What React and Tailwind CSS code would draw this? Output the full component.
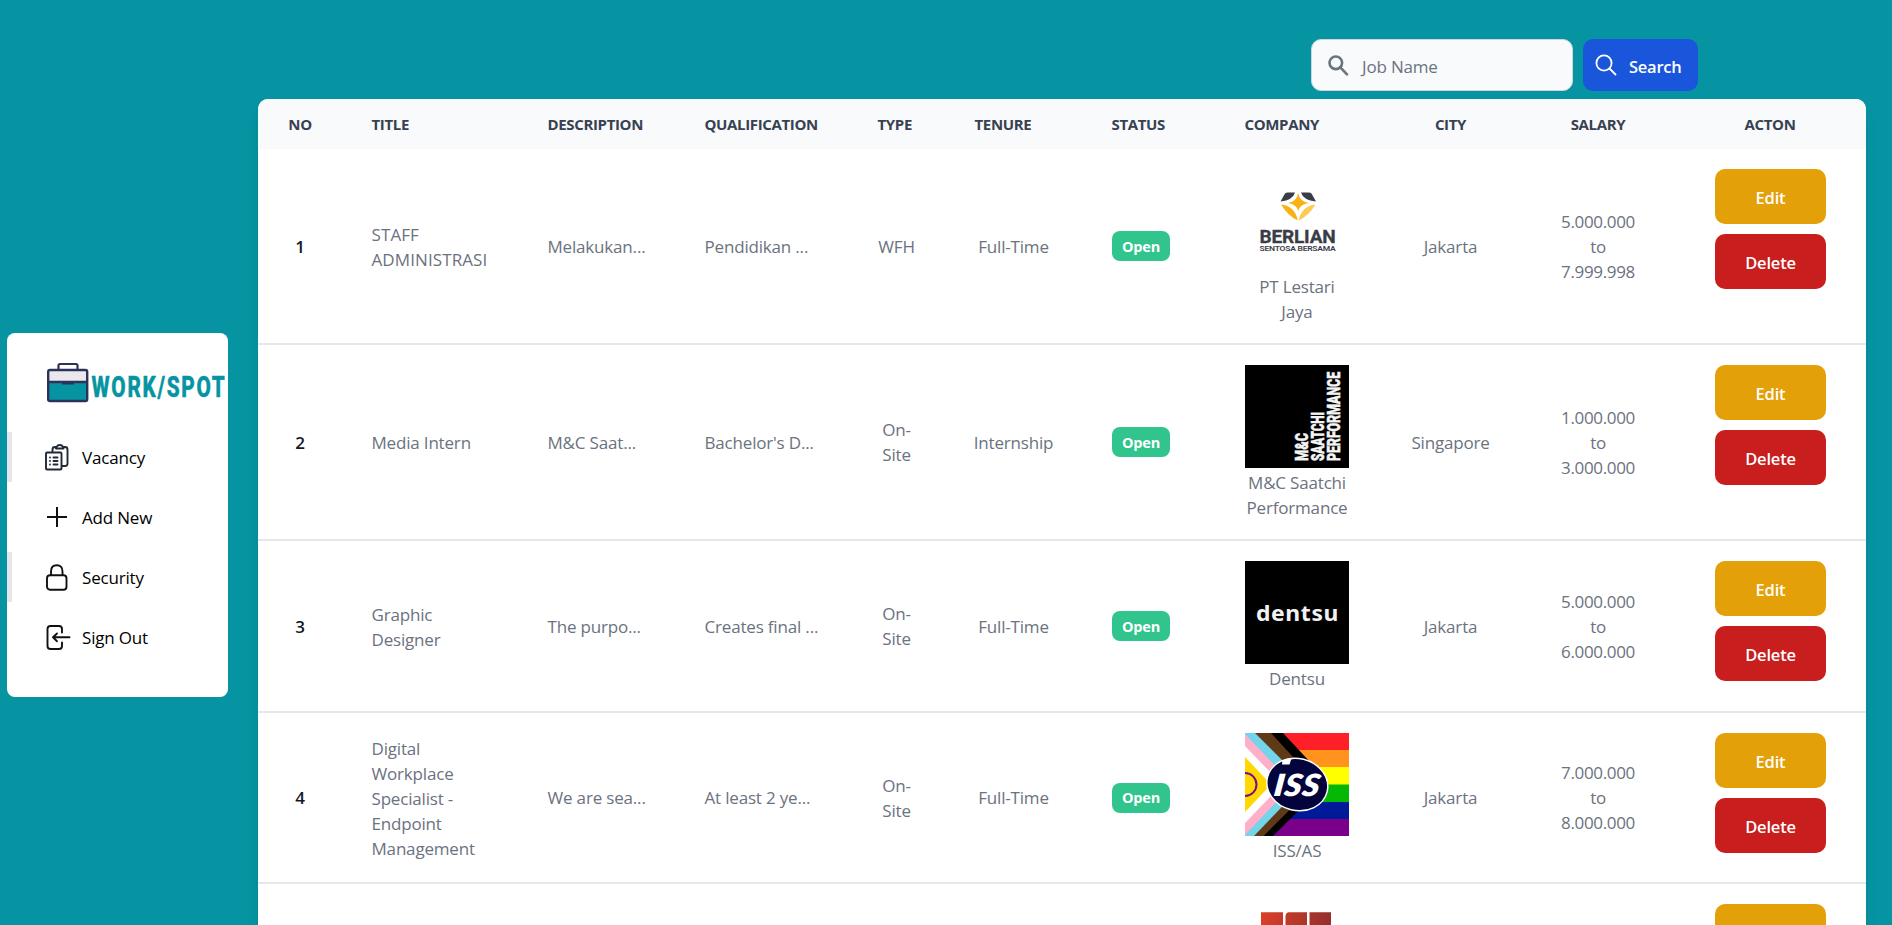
const rows = [
  { no: 1, h: "h-[196px]", titleTracking: "tracking-[0.1px]", title: ["STAFF", "ADMINISTRASI"], desc: "Melakukan...", qual: "Pendidikan ...", type: ["WFH"], tenure: "Full-Time", logo: "berlian", company: ["PT Lestari", "Jaya"], city: "Jakarta", min: "5.000.000", max: "7.999.998" },
  { no: 2, h: "h-[196px]", title: ["Media Intern"], desc: "M&C Saat...", qual: "Bachelor's D...", type: ["On-", "Site"], tenure: "Internship", logo: "mc", company: ["M&C Saatchi", "Performance"], city: "Singapore", min: "1.000.000", max: "3.000.000" },
  { no: 3, h: "h-[172px]", title: ["Graphic", "Designer"], desc: "The purpo...", qual: "Creates final ...", type: ["On-", "Site"], tenure: "Full-Time", logo: "dentsu", company: ["Dentsu"], city: "Jakarta", min: "5.000.000", max: "6.000.000" },
  { no: 4, h: "h-[171px]", title: ["Digital", "Workplace", "Specialist -", "Endpoint", "Management"], desc: "We are sea...", qual: "At least 2 ye...", type: ["On-", "Site"], tenure: "Full-Time", logo: "iss", company: ["ISS/AS"], city: "Jakarta", min: "7.000.000", max: "8.000.000" },
];

const heads = ["TITLE", "DESCRIPTION", "QUALIFICATION", "TYPE", "TENURE", "STATUS", "COMPANY"];

function Logo({ name }) {
  const cls = "block w-[104px] h-[103px] mx-auto mb-[2px]";
  if (name === "berlian")
    return (
      <svg className={cls} viewBox="0 0 104 103">
        <path d="M35.500 32.500 40 24.500Q41 23.500 43 23.500H50Q48 31 35.500 32.500ZM71 32.500 66.500 24.500Q65.500 23.500 63.500 23.500H56Q58 31 71 32.500Z" fill="#3a3d47" />
        <path d="M53.200 24Q54.500 32.500 64 34 54.500 35.500 53.200 42 51.800 35.500 43 34 51.800 32.500 53.200 24Z" fill="#f9b215" />
        <path d="M36 35.500Q50 37 52.800 51.500Q43 47 36 35.500Z" fill="#f9b215" />
        <path d="M70.500 35.500Q56.500 37 53.700 51.500Q63.500 47 70.500 35.500Z" fill="#fdcb55" />
        <text x="14.500" y="73.500" fontFamily="Roboto, sans-serif" fontWeight="700" fontSize="17.500" textLength="76" lengthAdjust="spacingAndGlyphs" fill="#3a3d47" stroke="#3a3d47" strokeWidth="0.300">BERLIAN</text>
        <text x="14.500" y="81.500" fontFamily="Roboto, sans-serif" fontWeight="600" fontSize="6.500" textLength="76" lengthAdjust="spacingAndGlyphs" fill="#3a3d47">SENTOSA BERSAMA</text>
      </svg>
    );
  if (name === "mc")
    return (
      <svg className={cls} viewBox="0 0 104 103">
        <rect width="104" height="103" fill="#000" />
        <g fill="#f4f4f4" stroke="#f4f4f4" strokeWidth="0.500" fontFamily="Roboto, 'Liberation Sans', sans-serif" fontWeight="900" fontSize="19">
          <text transform="translate(63 96) rotate(-90)" textLength="28" lengthAdjust="spacingAndGlyphs">M&amp;C</text>
          <text transform="translate(79 96) rotate(-90)" textLength="49" lengthAdjust="spacingAndGlyphs">SAATCHI</text>
          <text transform="translate(95 96) rotate(-90)" textLength="89" lengthAdjust="spacingAndGlyphs">PERFORMANCE</text>
        </g>
      </svg>
    );
  if (name === "dentsu")
    return (
      <svg className={cls} viewBox="0 0 104 103">
        <rect width="104" height="103" fill="#000" />
        <text x="11" y="59.500" fontFamily="'Noto Sans', sans-serif" fontWeight="700" fontSize="22" letterSpacing="0.600" textLength="83" lengthAdjust="spacingAndGlyphs" fill="#f2f2f2">dentsu</text>
      </svg>
    );
  if (name === "iss")
    return (
      <svg className={cls} viewBox="0 0 104 103">
        <rect width="104" height="18" fill="#ff1f27" />
        <rect y="17" width="104" height="18" fill="#ff931e" />
        <rect y="34" width="104" height="18" fill="#ffff00" />
        <rect y="51.500" width="104" height="18" fill="#06b806" />
        <rect y="69" width="104" height="18" fill="#001a98" />
        <rect y="86" width="104" height="17" fill="#7a0089" />
        <path d="M0 0H38L80 45V51.500L28 103H0Z" fill="#000" />
        <path d="M0 0H26L70 48V51.500L18.500 103H0Z" fill="#603a17" />
        <path d="M0 0H10L60 50L9 103H0Z" fill="#74d4ea" />
        <path d="M0 1 48 51.500 0 102Z" fill="#ffafc8" />
        <path d="M0 13 37 51.500 0 90Z" fill="#fff" />
        <path d="M0 24 26 51.500 0 79Z" fill="#ffd800" />
        <circle cx="0" cy="51.500" r="11.500" fill="none" stroke="#7a0b8a" strokeWidth="2" />
        <ellipse cx="52.300" cy="51.500" rx="30.700" ry="26" transform="rotate(14 52.300 51.500)" fill="#04043c" stroke="#fff" strokeWidth="1.500" />
        <text transform="translate(28 62.500) skewX(-8)" fontFamily="Lato, sans-serif" fontWeight="900" fontStyle="italic" fontSize="43" textLength="46" lengthAdjust="spacingAndGlyphs" fill="#fff">ıss</text>
        <path d="M37.500 27 46.500 25.500 44.500 31.500H37Z" fill="#fff" />
      </svg>
    );
  return (
    <svg className={cls} viewBox="0 0 104 103">
      <defs>
        <linearGradient id="red" gradientUnits="userSpaceOnUse" x1="16" x2="86" y1="0" y2="10">
          <stop offset="0" stopColor="#dc4029" />
          <stop offset="1" stopColor="#94302b" />
        </linearGradient>
      </defs>
      <path d="M16 7.300H38V60H16ZM44 7.300H62V60H40.500V11Q41 7.300 44 7.300ZM64.500 7.300H86V60H64.500Z" fill="url(#red)" />
    </svg>
  );
}

function BriefcaseLogo() {
  return (
    <svg className="block w-[182px] h-[42px] shrink-0 overflow-visible" viewBox="0 0 182 42">
      <path d="M11.500 8V3.500Q11.500 2 13 2H29Q30.500 2 30.500 3.500V8" fill="none" stroke="#2b335b" strokeWidth="2.200" />
      <rect x="1.200" y="8" width="39" height="12" rx="1.500" fill="#eae8ec" />
      <path d="M1.200 20H40.200V37Q40.200 39 38.500 39H3Q1.200 39 1.200 37Z" fill="#0694a2" />
      <rect x="1.200" y="8" width="39" height="31" rx="1.800" fill="none" stroke="#2b335b" strokeWidth="2.400" />
      <path d="M1 20H40M15 21.300H27" stroke="#2b335b" strokeWidth="2.600" />
      <text x="44.500" y="34.500" fontFamily="Roboto, sans-serif" fontWeight="800" fontSize="30" letterSpacing="2.500" textLength="135" lengthAdjust="spacingAndGlyphs" fill="#0694a2" stroke="#0694a2" strokeWidth="0.500">WORK/SPOT</text>
    </svg>
  );
}

const stroke = { fill: "none", stroke: "#111", strokeWidth: 1.9, strokeLinecap: "round", strokeLinejoin: "round" };

const menu = [
  {
    label: "Vacancy",
    icon: (
      <g {...stroke} stroke="#1f2937" strokeWidth="1.900">
        <path d="M7.500 7.500V5.500Q7.500 3 10 3H11M18.500 3H20Q22.500 3 22.500 5.500V19.500Q22.500 22 20 22H17.500" />
        <path d="M11 4.500V3.200Q11 2.500 12 2.500Q12.500 1 14.800 1T17.500 2.500Q18.500 2.500 18.500 3.200V4.500Z" />
        <rect x="1" y="8.500" width="15.500" height="17" rx="1" />
        <path d="M8.500 13.500H12.500M8.500 17H12.500M8.500 20.500H12.500M5 13.500V13.600M5 17V17.100M5 20.500V20.600" />
      </g>
    ),
    bar: true,
  },
  { label: "Add New", icon: <path {...stroke} strokeLinecap="butt" strokeWidth="2" d="M2 13H22M12 3V23" /> },
  { label: "Security", icon: <g {...stroke}><rect x="2" y="11.300" width="19.500" height="14.400" rx="3" /><path d="M6 11V7.500Q6 1.300 11.800 1.300T17.500 7.500V11" /></g>, bar: true },
  { label: "Sign Out", icon: <g {...stroke}><path d="M17 8.500V5Q17 2 14 2H5.500Q2.500 2 2.500 5V22Q2.500 25 5.500 25H14Q17 25 17 22V18.500M24.500 13.300H8.500M12 9.500 8 13.300 12 17.200" /></g> },
];

function Actions() {
  return (
    <div className="ml-[41px] flex w-[111px] flex-col gap-[10px]">
      <button type="button" className="h-[55px] rounded-[10px] bg-[#e3a008] pt-[2px]">Edit</button>
      <button type="button" className="h-[55px] rounded-[10px] bg-[#c81e1e] pt-[2px]">Delete</button>
    </div>
  );
}

export default function App() {
  return (
    <div className="flex h-[925px] w-full overflow-hidden bg-[#0694a2] font-['Open_Sans',sans-serif] text-[17px] leading-[25px] tracking-[-0.18px]">
      <aside className="ml-[7px] mt-[333px] h-[364px] w-[221px] shrink-0 rounded-[8px] bg-white pt-[29px]">
        <div className="ml-[40px] flex">
          <BriefcaseLogo />
        </div>
        <ul className="mt-[28px] space-y-[10px]">
          {menu.map((m) => (
            <li key={m.label} className={`flex h-[50px] items-center border-l-[5px] pl-[33px] text-black ${m.bar ? "border-[#e5e7eb]" : "border-transparent"}`}>
              <svg className="h-[27px] w-[27px] shrink-0" viewBox="0 0 27 27">{m.icon}</svg>
              <span className="ml-[10px]">{m.label}</span>
            </li>
          ))}
        </ul>
      </aside>

      <main className="ml-[30px] w-[1608px] shrink-0">
        <form className="flex h-[99px] items-start pl-[1053px] pt-[39px]">
          <div className="flex h-[52px] w-[262px] items-center rounded-[10px] border border-[#d1d5db] bg-[#f9fafb] text-[#6b7280]">
            <svg className="ml-[16px] h-[21px] w-[21px]" viewBox="0 0 21 21" fill="none" stroke="#6b7280" strokeWidth="2.600">
              <circle cx="7.800" cy="7.800" r="6.300" />
              <path d="M12.300 12.300 19 19.300" strokeLinecap="round" />
            </svg>
            <span className="ml-[13px] mt-[2px]">Job Name</span>
          </div>
          <button type="button" className="ml-[10px] flex h-[52px] w-[115px] items-center rounded-[10px] bg-[#1a56db] text-[16.500px] font-semibold tracking-[-0.25px] text-white">
            <svg className="ml-[12px] h-[22px] w-[22px]" viewBox="0 0 22 22" fill="none" stroke="#fff" strokeWidth="1.800">
              <circle cx="9" cy="9" r="7.600" />
              <path d="M14.500 14.500 20.500 20.500" strokeLinecap="round" />
            </svg>
            <span className="ml-[12px] mt-[2px]">Search</span>
          </button>
        </form>

        <div className="overflow-hidden rounded-[10px] bg-white shadow-lg">
          <table className="w-full table-fixed border-separate border-spacing-0 text-left text-[#6b7280]">
            <colgroup>
              <col className="w-[84px]" />
              <col className="w-[176px]" />
              <col className="w-[157px]" />
              <col className="w-[173px]" />
              <col className="w-[97px]" />
              <col className="w-[137px]" />
              <col className="w-[133px]" />
              <col className="w-[164px]" />
              <col className="w-[143px]" />
              <col className="w-[152px]" />
              <col className="w-[192px]" />
            </colgroup>
            <thead>
              <tr className="h-[50px] bg-[#f9fafb] text-[15px] leading-[20px] tracking-[-0.35px] text-[#374151]">
                <th className="text-center font-bold">NO</th>
                {heads.map((h) => (
                  <th key={h} className="pl-[29.500px] font-bold">{h}</th>
                ))}
                <th className="text-center font-bold">CITY</th>
                <th className="text-center font-bold">SALARY</th>
                <th className="text-center font-bold">ACTON</th>
              </tr>
            </thead>
            <tbody>
              {rows.map((r) => (
                <tr key={r.no} className={`${r.h} [&>td]:border-b-2 [&>td]:border-[#e5e7eb]`}>
                  <td className="text-center font-semibold text-[#111827]">{r.no}</td>
                  <td className={`whitespace-nowrap pl-[29.500px] pt-px ${r.titleTracking ?? ""}`}>
                    {r.title.map((t) => <div key={t}>{t}</div>)}
                  </td>
                  <td className="whitespace-nowrap pl-[29.500px]">{r.desc}</td>
                  <td className="whitespace-nowrap pl-[29.500px]">{r.qual}</td>
                  <td className="text-center">
                    {r.type.map((t) => <div key={t}>{t}</div>)}
                  </td>
                  <td className="text-center">{r.tenure}</td>
                  <td className="pl-[30px]">
                    <span className="flex h-[30px] w-[58px] items-center justify-center rounded-[8px] bg-[#31c48d] text-[14.500px] font-bold text-white">Open</span>
                  </td>
                  <td className="text-center">
                    <Logo name={r.logo} />
                    {r.company.map((c) => <div key={c}>{c}</div>)}
                  </td>
                  <td className="text-center">{r.city}</td>
                  <td className="text-center tracking-[-0.35px]">
                    <div>{r.min}</div>
                    <div>to</div>
                    <div>{r.max}</div>
                  </td>
                  <td className="pt-[20px] align-top text-[16.500px] font-semibold text-white">
                    <Actions />
                  </td>
                </tr>
              ))}
              <tr className="h-[146px]">
                <td colSpan={7} />
                <td><Logo name="red" /></td>
                <td colSpan={2} />
                <td className="pt-[20px] align-top">
                  <button type="button" className="ml-[41px] block h-[55px] w-[111px] rounded-[10px] bg-[#e3a008]" />
                </td>
              </tr>
            </tbody>
          </table>
        </div>
      </main>
    </div>
  );
}
